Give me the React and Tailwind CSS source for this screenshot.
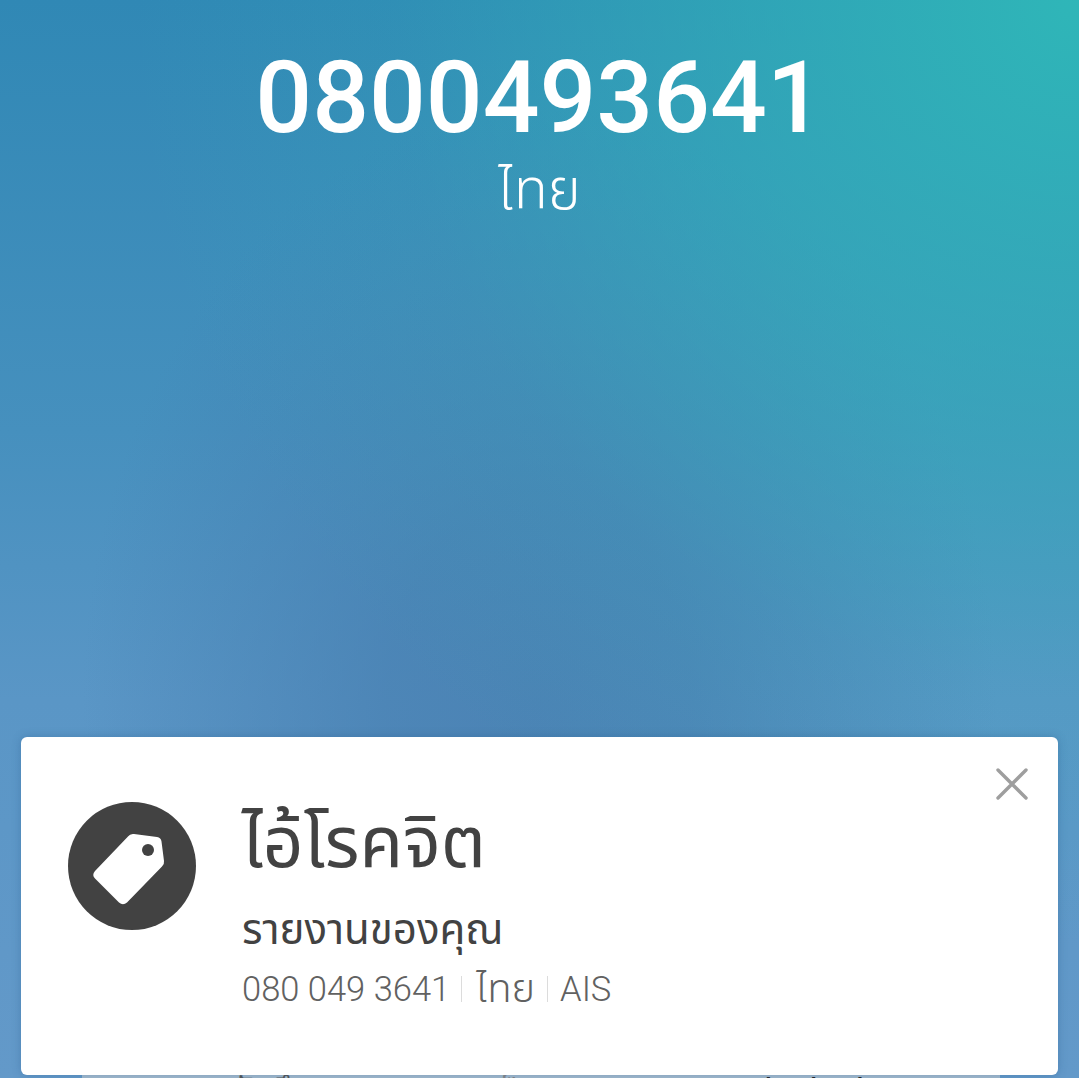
import React from "react";

const thai = "font-['Roboto','Noto_Sans','Noto_Sans_Thai','DejaVu_Sans',sans-serif]";

function TagBadge() {
  return (
    <svg viewBox="0 0 128 128" className="h-32 w-32 shrink-0">
      <circle cx="64" cy="64" r="64" fill="#424242" />
      <path
        d="M60 34.5 Q62 31.5 66 32 L89 35 Q93 35.5 93.5 39.5 L96 59 Q96.5 62 94 64.5 L59 100.5 Q55 104 51 100.5 L27 76.5 Q23.5 73 27 69 Z"
        fill="#fff"
      />
      <circle cx="80" cy="48" r="6" fill="#424242" />
    </svg>
  );
}

function CloseIcon() {
  return (
    <svg viewBox="0 0 32 32" className="h-8 w-8" stroke="#9e9e9e" strokeWidth="3.4" strokeLinecap="round">
      <path d="M2 2 L30 30 M30 2 L2 30" />
    </svg>
  );
}

export default function App() {
  return (
    <div className={`relative flex h-[1078px] w-full flex-col overflow-hidden bg-[linear-gradient(180deg,#3088b5_0%,#4690be_40%,#5a96c6_65%,#6399c9_100%)] ${thai}`}>
      <div className="absolute inset-0 bg-[radial-gradient(ellipse_at_50%_65%,rgba(70,125,175,0.75)_0%,rgba(70,125,175,0.65)_20%,rgba(70,125,175,0)_60%)]" />
      <div className="absolute inset-0 bg-[radial-gradient(circle_at_100%_0%,#2fb6b8_0%,rgba(47,182,184,0.6)_22%,rgba(47,182,184,0.15)_45%,rgba(47,182,184,0)_62%)]" />

      <div className="relative flex flex-col items-center pt-[39px] text-white">
        <div className="text-[100px] font-medium leading-[118px]">0800493641</div>
        <div className="mt-[-1px] text-[56px] font-light leading-[68px]">ไทย</div>
      </div>

      <div className="absolute bottom-0 left-[82px] right-[79px] flex h-[40px] overflow-hidden bg-[#a5bccf]">
        <span className="ml-[148px] mt-[32px] text-[34px] leading-[40px] text-[#555]">บันทึก</span>
        <span className="ml-[166px] mt-[32px] text-[34px] leading-[40px] text-[#888]">บล็อกเลข</span>
        <span className="ml-[137px] mt-[32px] text-[34px] leading-[40px] text-[#222]">Blocked</span>
      </div>

      <div className="relative mx-[21px] mt-auto mb-[3px] flex h-[338px] rounded-[6px] bg-white shadow-[0_0_8px_rgba(40,90,140,0.35)]">
        <div className="pl-[47px] pt-[65px]">
          <TagBadge />
        </div>
        <div className="ml-[46px] flex flex-col pt-[58px]">
          <div className="text-[71px] font-normal leading-[96px] text-[#424242]">ไอ้โรคจิต</div>
          <div className="mt-[13px] text-[42px] font-normal leading-[52px] text-[#424242]">รายงานของคุณ</div>
          <div className="mt-[10px] flex items-center text-[34.5px] font-light leading-[46px] text-[#616161]">
            <span>080 049 3641</span>
            <span className="ml-[11px] mr-[14px] h-[26px] w-px bg-[#dcdcdc]" />
            <span className="text-[40px]">ไทย</span>
            <span className="mx-[12px] h-[26px] w-px bg-[#dcdcdc]" />
            <span>AIS</span>
          </div>
        </div>
        <button className="absolute right-[30px] top-[31px]">
          <CloseIcon />
        </button>
      </div>
    </div>
  );
}
